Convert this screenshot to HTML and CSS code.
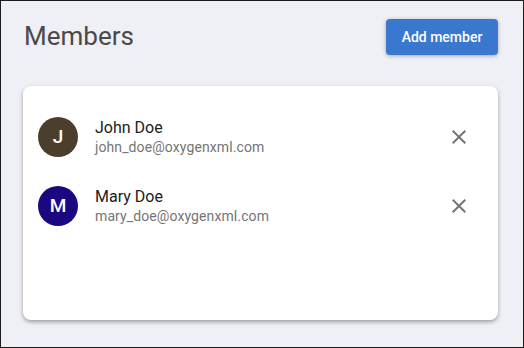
FILE: index.html
```html
<!DOCTYPE html>
<html lang="en">
<head>
  <meta charset="UTF-8" />
  <title>Members</title>
  <link rel="stylesheet" href="styles.css">
</head>
<body>
  <div class="page">
    <!-- Header -->
    <div class="page-header">
      <h1 class="page-title">Members</h1>
      <button class="add-button">Add member</button>
    </div>

    <!-- Members list -->
    <div class="members-card">
      <div class="member-row">
        <div class="avatar avatar-john">J</div>
        <div class="member-info">
          <div class="member-name">John Doe</div>
          <div class="member-email">john_doe@oxygenxml.com</div>
        </div>
        <button class="remove-button" aria-label="Remove John Doe">
          <svg viewBox="0 0 24 24" width="24" height="24"><path d="M19 6.41L17.59 5 12 10.59 6.41 5 5 6.41 10.59 12 5 17.59 6.41 19 12 13.41 17.59 19 19 17.59 13.41 12z"/></svg>
        </button>
      </div>
      <div class="member-row">
        <div class="avatar avatar-mary">M</div>
        <div class="member-info">
          <div class="member-name">Mary Doe</div>
          <div class="member-email">mary_doe@oxygenxml.com</div>
        </div>
        <button class="remove-button" aria-label="Remove Mary Doe">
          <svg viewBox="0 0 24 24" width="24" height="24"><path d="M19 6.41L17.59 5 12 10.59 6.41 5 5 6.41 10.59 12 5 17.59 6.41 19 12 13.41 17.59 19 19 17.59 13.41 12z"/></svg>
        </button>
      </div>
    </div>
  </div>
</body>
</html>
```

FILE: styles.css
```css
:root {
  --bg: #eff0f5;
  --primary: #3a77cf;
  --text: #212121;
  --text-muted: #757575;
}

* {
  margin: 0;
  padding: 0;
  box-sizing: border-box;
}
body {
  font-family: Roboto, "Liberation Sans", sans-serif;
  background: var(--bg);
  color: var(--text);
}

.page {
  height: 348px;
  border: 1px solid #1c1c1c;
  padding: 17px 25px 0 22px;
}

/* Header */
.page-header {
  display: flex;
  justify-content: space-between;
  align-items: center;
  height: 37px;
}
.page-title {
  font-size: 26px;
  font-weight: 400;
  color: #4a4a4a;
  margin-left: 1px;
  margin-top: -2px;
}
.add-button {
  height: 36px;
  width: 112px;
  border: none;
  border-radius: 4px;
  background: var(--primary);
  color: #fff;
  font-family: inherit;
  font-size: 14px;
  font-weight: 500;
  box-shadow: 0 1px 4px rgba(0, 0, 0, 0.3);
  cursor: pointer;
}

/* Card */
.members-card {
  margin-top: 31px;
  height: 234px;
  background: #fff;
  border-radius: 8px;
  box-shadow: 0 2px 4px rgba(0, 0, 0, 0.35);
  padding: 16px 15px 0 15px;
}
.member-row {
  display: flex;
  align-items: center;
  height: 69px;
}
.avatar {
  width: 40px;
  height: 40px;
  border-radius: 50%;
  color: #fff;
  font-size: 19px;
  font-weight: 500;
  display: flex;
  align-items: center;
  justify-content: center;
  flex-shrink: 0;
}
.avatar-john { background: #4b3f2b; }
.avatar-mary { background: #1b0780; }

.member-info {
  flex: 1;
  margin-left: 17px;
}
.member-name {
  font-size: 16px;
  line-height: 20px;
  color: var(--text);
}
.member-email {
  font-size: 14px;
  line-height: 18px;
  color: var(--text-muted);
  letter-spacing: 0.1px;
}

.remove-button {
  width: 48px;
  height: 48px;
  border: none;
  background: transparent;
  display: flex;
  align-items: center;
  justify-content: center;
  cursor: pointer;
}
.remove-button svg { fill: #757575; }
```
